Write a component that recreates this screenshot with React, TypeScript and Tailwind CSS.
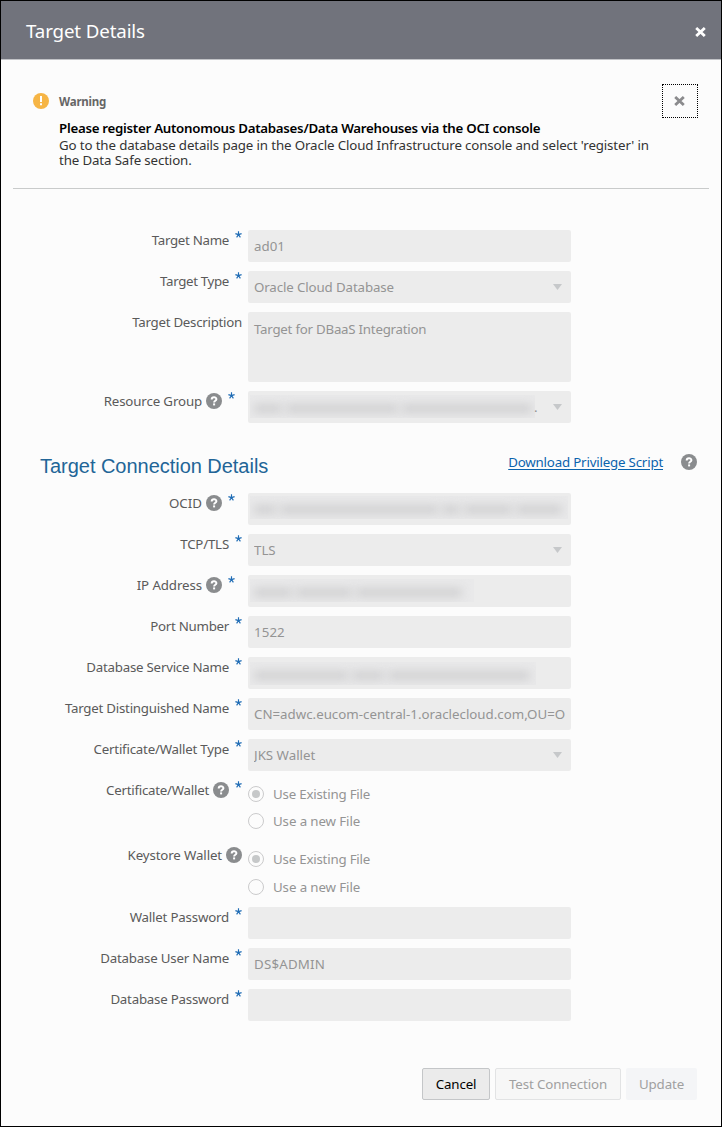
import type { ReactNode } from "react";

const Close = ({ className }: { className: string }) => (
  <svg viewBox="0 0 11 10" className={className}>
    <path d="M1.2 1 L9.8 9 M9.8 1 L1.2 9" stroke="currentColor" strokeWidth="2.8" fill="none" />
  </svg>
);

const Help = ({ className = "" }: { className?: string }) => (
  <svg viewBox="0 0 16 16" className={`h-4 w-4 shrink-0 ${className}`}>
    <circle cx="8" cy="8" r="8" fill="#8a8c8e" />
    <path d="M5.7 6.4 C5.7 3.7 10.4 3.6 10.4 6.2 C10.4 7.8 8.1 7.7 8.1 9.4" fill="none" stroke="#fff" strokeWidth="2" />
    <rect x="7.1" y="10.4" width="2" height="2" fill="#fff" />
  </svg>
);

const Star = ({ className = "" }: { className?: string }) => (
  <svg viewBox="0 0 7 7" className={`h-[7px] w-[7px] shrink-0 ${className}`}>
    <path d="M3.5 3.6 V0.2 M3.5 3.6 L0.4 2.6 M3.5 3.6 L6.6 2.6 M3.5 3.6 L1.6 6.4 M3.5 3.6 L5.4 6.4" stroke="#1f6cb5" strokeWidth="1.15" />
  </svg>
);

type RowProps = {
  label: string;
  tracking?: string;
  help?: boolean;
  required?: boolean;
  shift?: string;
  children: ReactNode;
};

const Row = ({ label, tracking = "tracking-[-0.2px]", help, required = true, shift = "", children }: RowProps) => (
  <div className="flex items-start">
    <div className={`flex h-5 w-[241px] items-center justify-end whitespace-nowrap text-[#5a5a5a] ${shift}`}>
      <span className={tracking}>{label}</span>
      {help && <Help className="ml-1" />}
      {required && <Star className="mb-[12px] ml-[6px]" />}
    </div>
    <div className="ml-[6px] w-[323px]">{children}</div>
  </div>
);

const Field = ({ value = "", select, tracking = "", children }: { value?: string; select?: boolean; tracking?: string; children?: ReactNode }) => (
  <div className="flex h-8 items-center overflow-hidden rounded-[2px] bg-[#ececec] px-1.5 leading-5 text-[#949494]">
    {children ?? <span className={`flex-1 overflow-hidden whitespace-nowrap ${tracking}`}>{value}</span>}
    {select && (
      <svg viewBox="0 0 9 6" className="mr-[3px] ml-auto h-[6px] w-[9px] shrink-0">
        <path d="M0 0H9L4.5 6Z" fill="#c6c8ca" />
      </svg>
    )}
  </div>
);

const Redacted = ({ widths, className = "" }: { widths: string[]; className?: string }) => (
  <div className={`-ml-1 flex h-[23px] shrink-0 items-center overflow-hidden bg-[#e9e9ea] px-1 ${className}`}>
    {widths.map((w, i) => (
      <span key={i} className={`mt-1 mr-1 h-[9px] shrink-0 bg-[#d0d0d1] blur-[5px] ${w}`} />
    ))}
  </div>
);

const Radio = ({ checked, label }: { checked?: boolean; label: string }) => (
  <div className="flex h-4 items-center text-[#949494]">
    <span className="flex h-4 w-4 items-center justify-center rounded-full border border-[#cbcbcc]">
      {checked && <span className="h-2 w-2 rounded-full bg-[#c6c8c9]" />}
    </span>
    <span className={`ml-[9px] ${checked ? "tracking-[-0.21px]" : "tracking-[-0.1px]"}`}>{label}</span>
  </div>
);

export default function App() {
  return (
    <div className="flex h-[1127px] w-[722px] flex-col border border-black bg-[#fcfcfc] font-['Noto_Sans',sans-serif] text-[13.3px] leading-[15px] text-[#333]">
      <header className="flex h-[59px] shrink-0 items-center justify-between border-b border-[#c2c3c7] bg-[#71737c] pr-[15px] pl-[25px] text-white">
        <h1 className="mt-[2px] text-[18.7px] leading-6 tracking-[-0.12px]">Target Details</h1>
        <Close className="mt-[3px] h-[10px] w-[11px]" />
      </header>

      <section className="mx-3 flex h-[129px] shrink-0 border-b border-[#c9cbcb] pl-5">
        <svg viewBox="0 0 16 16" className="mt-[33px] h-4 w-4 shrink-0">
          <circle cx="8" cy="8" r="8" fill="#f6b545" />
          <path d="M7 3H9V9H7Z M7 10.3H9V12.3H7Z" fill="#fff" />
        </svg>
        <div className="ml-[10px] flex-1 pt-[34px] whitespace-nowrap">
          <h2 className="text-[11.5px] font-bold tracking-[-0.2px] text-[#666]">Warning</h2>
          <p className="mt-3 font-semibold tracking-[-0.28px] text-black">Please register Autonomous Databases/Data Warehouses via the OCI console</p>
          <p className="mt-[2px] tracking-[-0.13px]">
            Go to the database details page in the Oracle Cloud Infrastructure console and select 'register' in
            <br />
            the Data Safe section.
          </p>
        </div>
        <button className="mt-6 mr-[11px] flex h-[34px] w-9 shrink-0 items-center justify-center border border-dotted border-black text-[#8b8b8d]">
          <Close className="mr-px h-[10px] w-[11px]" />
        </button>
      </section>

      <section className="mt-[41px] flex flex-col gap-[9px]">
        <Row label="Target Name" tracking="tracking-[-0.3px]"><Field value="ad01" /></Row>
        <Row label="Target Type" tracking="tracking-[-0.34px]"><Field value="Oracle Cloud Database" tracking="tracking-[-0.12px]" select /></Row>
        <Row label="Target Description" tracking="tracking-[-0.27px]" required={false}>
          <div className="h-[70px] rounded-[2px] bg-[#ececec] px-1.5 pt-[10px] tracking-[-0.24px] text-[#949494]">Target for DBaaS Integration</div>
        </Row>
        <Row label="Resource Group" tracking="tracking-[-0.14px]" help shift="pr-[7px]">
          <Field select>
            <Redacted widths={["w-[28px]", "w-[112px]", "w-[130px]"]} className="-mt-[2px] w-[285px]" />
            <span className="-ml-px">.</span>
          </Field>
        </Row>
      </section>

      <div className="mt-[26px] flex h-[34px] items-center pl-[39px]">
        <h2 className="font-['Liberation_Sans',sans-serif] text-[20px] leading-6 tracking-[-0.03px] whitespace-nowrap text-[#226597]">Target Connection Details</h2>
        <a className="mr-[18px] mb-[7px] ml-auto tracking-[-0.19px] whitespace-nowrap text-[#0b63ad] underline underline-offset-2">Download Privilege Script</a>
        <Help className="mr-[24px] mb-[8px]" />
      </div>

      <section className="mt-[10px] flex flex-col gap-[9px]">
        <Row label="OCID" tracking="tracking-normal" help shift="pr-[7px]">
          <Field><Redacted widths={["w-[22px]", "w-[158px]", "w-[18px]", "w-[48px]", "w-[46px]"]} className="-mt-[3px] w-[318px]" /></Field>
        </Row>
        <Row label="TCP/TLS"><Field value="TLS" select /></Row>
        <Row label="IP Address" tracking="tracking-[-0.1px]" help shift="pr-[7px]">
          <Field><Redacted widths={["w-[38px]", "w-[56px]", "w-[106px]"]} className="-mt-[2px] w-[224px]" /></Field>
        </Row>
        <Row label="Port Number" tracking="tracking-[-0.27px]"><Field value="1522" tracking="tracking-[0.1px]" /></Row>
        <Row label="Database Service Name" tracking="tracking-[-0.24px]">
          <Field><Redacted widths={["w-[94px]", "w-[32px]", "w-[142px]"]} className="w-[286px]" /></Field>
        </Row>
        <Row label="Target Distinguished Name" tracking="tracking-[-0.24px]"><Field value="CN=adwc.eucom-central-1.oraclecloud.com,OU=O" /></Row>
        <Row label="Certificate/Wallet Type" tracking="tracking-[-0.22px]"><Field value="JKS Wallet" select /></Row>
        <Row label="Certificate/Wallet" tracking="tracking-[-0.25px]" help>
          <div className="flex h-[56px] flex-col gap-[11px] pt-[6px]">
            <Radio checked label="Use Existing File" />
            <Radio label="Use a new File" />
          </div>
        </Row>
        <Row label="Keystore Wallet" tracking="tracking-[-0.13px]" help required={false}>
          <div className="flex h-[53px] flex-col gap-3 pt-[6px]">
            <Radio checked label="Use Existing File" />
            <Radio label="Use a new File" />
          </div>
        </Row>
        <Row label="Wallet Password"><Field /></Row>
        <Row label="Database User Name"><Field value="DS$ADMIN" tracking="tracking-[0.2px]" /></Row>
        <Row label="Database Password" tracking="tracking-[-0.23px]"><Field /></Row>
      </section>

      <footer className="mt-auto mr-6 mb-[26px] flex justify-end gap-[5px] tracking-[-0.12px] whitespace-nowrap text-[#a0a0a0]">
        <button className="h-8 w-[68px] rounded-[2px] border border-[#c4c6c8] bg-[#ebebeb] text-black">Cancel</button>
        <button className="h-8 w-[126px] rounded-[2px] border border-[#e2e3e4] bg-[#f7f7f7]">Test Connection</button>
        <button className="h-8 w-[71px] rounded-[2px] bg-[#f4f5f7]">Update</button>
      </footer>
    </div>
  );
}
